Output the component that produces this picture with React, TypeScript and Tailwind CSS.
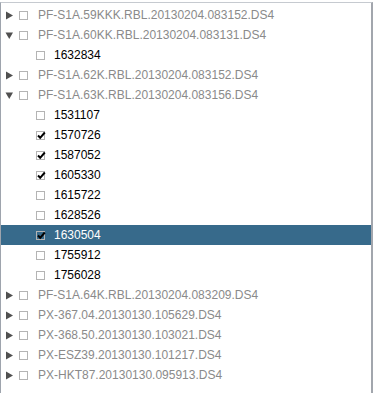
import React from 'react';

type Node = {
    id: string;
    label: string;
    open?: boolean;
    children?: { id: string; checked?: boolean; selected?: boolean }[];
};

const tree: Node[] = [
    { id: 'a', label: 'PF-S1A.59KKK.RBL.20130204.083152.DS4' },
    { id: 'b', label: 'PF-S1A.60KK.RBL.20130204.083131.DS4', open: true, children: [{ id: '1632834' }] },
    { id: 'c', label: 'PF-S1A.62K.RBL.20130204.083152.DS4' },
    {
        id: 'd',
        label: 'PF-S1A.63K.RBL.20130204.083156.DS4',
        open: true,
        children: [
            { id: '1531107' },
            { id: '1570726', checked: true },
            { id: '1587052', checked: true },
            { id: '1605330', checked: true },
            { id: '1615722' },
            { id: '1628526' },
            { id: '1630504', checked: true, selected: true },
            { id: '1755912' },
            { id: '1756028' },
        ],
    },
    { id: 'e', label: 'PF-S1A.64K.RBL.20130204.083209.DS4' },
    { id: 'f', label: 'PX-367.04.20130130.105629.DS4' },
    { id: 'g', label: 'PX-368.50.20130130.103021.DS4' },
    { id: 'h', label: 'PX-ESZ39.20130130.101217.DS4' },
    { id: 'i', label: 'PX-HKT87.20130130.095913.DS4' },
];

const Check: React.FC<{ checked?: boolean }> = ({ checked }) => (
    <span className="relative inline-block w-[9px] h-[9px] border border-[#b4b4b4] shrink-0">
        {checked && (
            <svg className="absolute left-[0px] top-[-1px]" width="9" height="9" viewBox="0 0 9 9">
                <path d="M1 4.5 L3.2 6.8 L7.8 1.5" fill="none" stroke="#000" strokeWidth="2" />
            </svg>
        )}
    </span>
);

const Arrow: React.FC<{ open?: boolean }> = ({ open }) =>
    open ? (
        <svg width="9" height="9" viewBox="0 0 9 9" className="shrink-0">
            <path d="M0.5 1.5 L8 1.5 L4.25 8 Z" fill="#505050" />
        </svg>
    ) : (
        <svg width="9" height="9" viewBox="0 0 9 9" className="shrink-0">
            <path d="M1 0.5 L8 4.5 L1 8.5 Z" fill="#505050" />
        </svg>
    );

const App: React.FC = () => {
    return (
        <div className="w-[373px] h-[393px] bg-white overflow-hidden pt-[2px]" style={{ fontFamily: '"Liberation Sans", Arial, sans-serif' }}>
            <div className="w-[373px] h-[400px] border-l border-t border-r-2 border-l-[#9ea4ad] border-t-[#c6cad0] border-r-[#a2a6ad] pt-[2px] text-[12px]">
                {tree.map(node => (
                    <React.Fragment key={node.id}>
                        <div className="h-[20px] flex items-center">
                            <span className="w-[18px] pl-[4px] flex items-center">
                                <Arrow open={node.open} />
                            </span>
                            <Check />
                            <span className="ml-[10px] text-[#8a8a8a] whitespace-nowrap">{node.label}</span>
                        </div>
                        {node.open &&
                            node.children?.map(child => (
                                <div
                                    key={child.id}
                                    className={`h-[20px] flex items-center pl-[35px] ${child.selected ? 'bg-[#376a8b]' : ''}`}
                                >
                                    <Check checked={child.checked} />
                                    <span className={`ml-[9px] ${child.selected ? 'text-white' : 'text-black'}`}>{child.id}</span>
                                </div>
                            ))}
                    </React.Fragment>
                ))}
            </div>
        </div>
    );
};

export default App;
